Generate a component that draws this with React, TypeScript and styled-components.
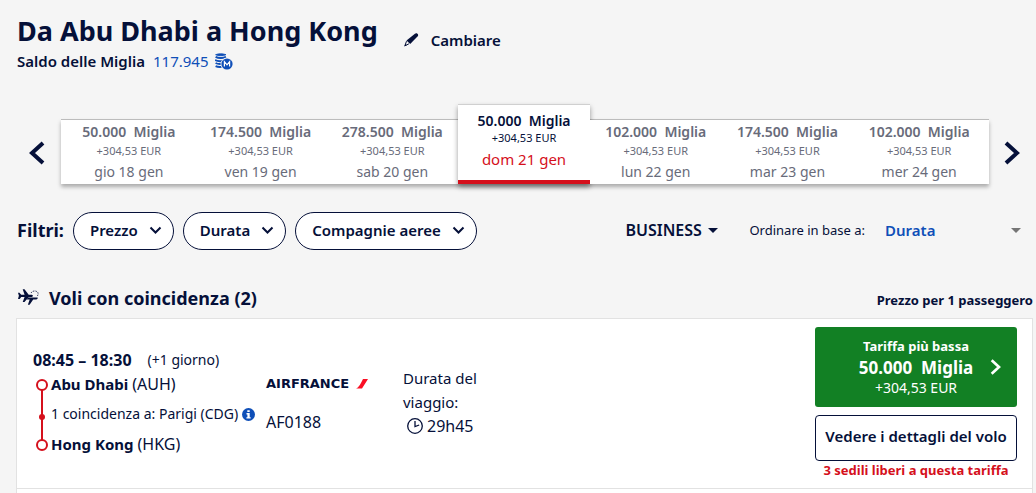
import React from "react";
import styled, { createGlobalStyle } from "styled-components";

const navy = "#051039";
const blue = "#0f4fb8";
const red = "#d5101c";
const grey = "#686b7a";

const GlobalStyle = createGlobalStyle`
  * { box-sizing: border-box; }
  body {
    margin: 0;
    background: #f5f5f5;
    color: ${navy};
    font-family: "Noto Sans", "Open Sans", sans-serif;
    font-size: 15px;
    line-height: 24px;
  }
  h1, h2, p, ul, ol { margin: 0; padding: 0; list-style: none; }
  button, select { font: inherit; color: inherit; cursor: pointer; }
  svg { display: block; flex: none; }
`;

const Page = styled.main`
  padding: 12px 3px 0 16px;
`;

const Header = styled.header`
  display: flex;
  align-items: center;
  gap: 26px;
  height: 38px;
  padding-left: 1px;
`;

const Title = styled.h1`
  font-size: 27px;
  line-height: 38px;
  font-weight: 700;
`;

const ChangeButton = styled.button`
  display: flex;
  align-items: center;
  gap: 12px;
  padding: 18px 0 0;
  border: 0;
  background: none;
  font-size: 15px;
  line-height: 20px;
  font-weight: 600;
`;

const Balance = styled.p`
  display: flex;
  align-items: center;
  gap: 8px;
  height: 24px;
  padding: 0 0 2px 1px;
  font-weight: 600;
`;

const BalanceLink = styled.a`
  display: flex;
  align-items: center;
  gap: 6px;
  color: ${blue};
  font-weight: 400;
  text-decoration: none;
`;

const Carousel = styled.nav`
  display: flex;
  align-items: flex-end;
  margin-top: 45px;
`;

const ArrowButton = styled.button<{ $side: "left" | "right" }>`
  display: flex;
  align-items: center;
  justify-content: ${(p) => (p.$side === "left" ? "flex-start" : "flex-end")};
  width: ${(p) => (p.$side === "left" ? 45 : 44)}px;
  height: 62px;
  padding: 0 12px;
  border: 0;
  background: none;
`;

const Days = styled.ol`
  && {
    padding: 0 4px 0 2px;
  }
  display: flex;
  flex: 1;
  align-items: flex-end;
  height: 65px;
  border-top: 1px solid #bcbcbc;
  background: #fff;
  box-shadow: 0 3px 4px rgba(0, 0, 0, 0.3);
`;

const Day = styled.li`
  flex: 1 1 0;
  min-width: 0;
  display: flex;
`;

const DayButton = styled.button<{ $selected?: boolean }>`
  flex: 1;
  display: flex;
  flex-direction: column;
  align-items: center;
  height: ${(p) => (p.$selected ? 80 : 64)}px;
  padding: ${(p) => (p.$selected ? 6 : 2)}px 0 0;
  border: 0;
  border-top: ${(p) => (p.$selected ? "1px solid #d0d0d0" : "0")};
  border-bottom: ${(p) => (p.$selected ? `4px solid ${red}` : "0")};
  background: #fff;
  box-shadow: ${(p) => (p.$selected ? "0 3px 5px rgba(0, 0, 0, 0.4)" : "none")};
  color: ${(p) => (p.$selected ? navy : grey)};
  white-space: nowrap;
`;

const DayMiles = styled.strong`
  font-size: 14px;
  line-height: 20px;
  font-weight: 600;
  white-space: pre;
`;

const DayTax = styled.span<{ $selected?: boolean }>`
  font-size: 11px;
  line-height: ${(p) => (p.$selected ? 14 : 18)}px;
`;

const DayDate = styled.span<{ $selected?: boolean }>`
  margin-top: ${(p) => (p.$selected ? 4 : 2)}px;
  font-size: ${(p) => (p.$selected ? 15 : 14)}px;
  line-height: 20px;
  color: ${(p) => (p.$selected ? red : "inherit")};
`;

const Toolbar = styled.section`
  display: flex;
  align-items: center;
  justify-content: space-between;
  margin-top: 28px;
  padding-left: 1px;
`;

const Filters = styled.div`
  display: flex;
  align-items: center;
  gap: 9px;
`;

const FilterLabel = styled.span`
  padding-bottom: 2px;
  font-size: 18px;
  font-weight: 700;
`;

const FilterButton = styled.button`
  display: flex;
  align-items: center;
  gap: 11px;
  height: 38px;
  padding: 0 11px 2px 16px;
  border: 1px solid ${navy};
  border-radius: 19px;
  background: #fff;
  font-weight: 600;
`;

const Sorting = styled.div`
  display: flex;
  align-items: center;
  padding: 0 12px 2px 0;
`;

const SelectWrap = styled.div<{ $gap: number }>`
  display: flex;
  align-items: center;
  margin-left: ${(p) => p.$gap}px;
`;

const Select = styled.select<{ $width: number; $color: string; $size: number }>`
  appearance: none;
  width: ${(p) => p.$width}px;
  padding: 0;
  border: 0;
  background: none;
  color: ${(p) => p.$color};
  font-size: ${(p) => p.$size}px;
  font-weight: 600;
`;

const SortLabel = styled.label`
  margin-left: 31px;
  font-size: 13px;
`;

const SectionHead = styled.div`
  display: flex;
  align-items: center;
  gap: 10px;
  height: 24px;
  margin-top: 36px;
  padding-left: 2px;
`;

const SectionTitle = styled.h2`
  flex: 1;
  font-size: 18px;
  line-height: 24px;
  font-weight: 700;
`;

const PriceNote = styled.p`
  padding-top: 4px;
  font-size: 13px;
  font-weight: 700;
`;

const Results = styled.section`
  margin-top: 8px;
  border: 1px solid #e2e2e2;
  border-bottom: 0;
  background: #fff;
`;

const FlightCard = styled.article`
  display: grid;
  grid-template-columns: 233px 137px 1fr 202px;
  height: 170px;
  padding: 8px 15px 0 16px;
  border-bottom: 1px solid #e2e2e2;
`;

const NextCard = styled.div`
  height: 4px;
`;

const Itinerary = styled.div`
  padding-top: 21px;
  white-space: nowrap;
`;

const Times = styled.p`
  display: flex;
  gap: 16px;
  font-size: 16px;
`;

const Strong = styled.strong`
  font-weight: 700;
`;

const Small = styled.span`
  font-size: 14px;
`;

const Code = styled.span`
  font-size: 16px;
`;

const Route = styled.div`
  display: flex;
  gap: 3px;
  padding-left: 3px;
`;

const Stops = styled.ul`
  display: grid;
  gap: 6px;
`;

const Stop = styled.li`
  display: flex;
  align-items: center;
  gap: 4px;
`;

const InfoButton = styled.button`
  padding: 0;
  border: 0;
  background: none;
`;

const Airline = styled.div`
  padding-top: 44px;
`;

const AirlineLogo = styled.div`
  display: flex;
  align-items: center;
  gap: 7px;
  height: 26px;
  font-family: "DejaVu Sans", sans-serif;
  font-size: 13px;
  font-weight: 700;
`;

const FlightNumber = styled.p`
  margin-top: 13px;
  font-size: 16px;
`;

const Duration = styled.div`
  width: 90px;
  padding-top: 39px;
`;

const DurationValue = styled.p`
  display: flex;
  align-items: center;
  gap: 4px;
  padding-left: 4px;
  font-size: 16px;
`;

const Fare = styled.div`
  display: flex;
  flex-direction: column;
  white-space: nowrap;
`;

const FareButton = styled.button`
  display: grid;
  grid-template-columns: 1fr auto 1fr;
  align-items: center;
  height: 80px;
  padding: 0 15px;
  border: 0;
  border-radius: 3px;
  background: #128024;
  color: #fff;
`;

const FareText = styled.span`
  grid-column: 2;
  display: grid;
  justify-items: center;
  line-height: 21px;
`;

const FareLabel = styled(Strong)`
  font-size: 13px;
`;

const FareMiles = styled(Strong)`
  font-size: 17px;
  white-space: pre;
`;

const FareTax = styled.span`
  font-size: 14px;
  line-height: 20px;
`;

const FareArrow = styled.span`
  justify-self: end;
`;

const DetailsButton = styled.button`
  height: 46px;
  margin-top: 8px;
  padding: 0 0 4px;
  border: 1px solid ${navy};
  border-radius: 4px;
  background: #fff;
  font-weight: 600;
`;

const SeatsLeft = styled.p`
  color: ${red};
  font-size: 13px;
  line-height: 18px;
  font-weight: 700;
  text-align: center;
`;

type Direction = "left" | "right" | "down";

const chevronPaths: Record<Direction, string> = {
  left: "M15 2 4 12 15 22",
  right: "M2 2 13 12 2 22",
  down: "M1.5 1.5 6.5 6.5 11.5 1.5",
};

const Chevron = ({ dir, width, height, box, stroke }: { dir: Direction; width: number; height: number; box: string; stroke: number }) => (
  <svg width={width} height={height} viewBox={box} fill="none" stroke="currentColor" strokeWidth={stroke} aria-hidden="true">
    <path d={chevronPaths[dir]} />
  </svg>
);

const Caret = ({ color }: { color: string }) => (
  <svg width="10" height="5" viewBox="0 0 10 5" fill={color} aria-hidden="true">
    <path d="M0 0h10L5 5z" />
  </svg>
);

const Pencil = () => (
  <svg width="15" height="14" viewBox="0 0 15 14" aria-hidden="true">
    <path fill={navy} d="M10.6 1.100c1-.8 1.900-1 2.800-.3.9.8 1 1.700.3 2.500L6.200 11 2.500 7.600z" />
    <path fill="none" stroke={navy} strokeWidth="1" d="M2.500 8.200.9 12.800l4-2" />
    <path fill={navy} d="M.3 13.400 1.300 11l1.400 1.300z" />
  </svg>
);

const Coins = () => (
  <svg width="18" height="17" viewBox="0 0 18 17" aria-hidden="true">
    <g fill="none" stroke={blue} strokeWidth="1.900">
      <path d="M.6 1.700c2.500-1.200 7.500-1.200 10.400 0-2.900 1.300-7.900 1.300-10.400 0z" fill={blue} strokeWidth=".8" />
      <path d="M.6 3.900c2.800 1.500 7.600 1.500 10.400 0M0 7c2 1.300 5 1.500 8 1M.6 10c1.600.9 4 1.200 6 .9M.6 13.100c1.600.8 3.800 1.100 6 .8" />
    </g>
    <circle cx="12" cy="11" r="6.400" fill="#f5f5f5" />
    <circle cx="12" cy="11" r="5.600" fill={blue} />
    <path d="M9.400 13.600V8.700L12 11.800l2.600-3.100v4.900" fill="none" stroke="#fff" strokeWidth="1.200" />
  </svg>
);

const Planes = () => (
  <svg width="21" height="18" viewBox="0 0 21 18" aria-hidden="true">
    <g fill={navy}>
      <path d="M0 3.700h1.500l1.700 2.100h3.400L4.700.2h1.800l4.200 5.600h3c1.700.3 1.700 1.900 0 2.200h-3l-4.200 5H4.700L6.600 8H3.200L1.700 10H0l.9-3.200z" />
      <path d="M10 8.500h9.600c.5 1-.4 1.900-1.500 1.900h-2.900l-3.600 5.300h-1.700l1.800-5.300H8.600z" />
    </g>
    <path fill="none" stroke={navy} strokeWidth=".8" strokeDasharray="1.500 1" d="M13 4C14 1.900 17.300 1.300 19.300 2.800c1.200 1.200 1.100 3.300-.5 5" />
  </svg>
);

const RouteLine = () => (
  <svg width="12" height="84" viewBox="0 0 12 84" aria-hidden="true">
    <path stroke={red} strokeWidth="2" d="M6 18v50" />
    <g fill="#fff" stroke={red} strokeWidth="2">
      <circle cx="6" cy="13" r="5" />
      <circle cx="6" cy="73" r="5" />
    </g>
    <circle cx="6" cy="45" r="3" fill={red} />
  </svg>
);

const Info = () => (
  <svg width="13" height="13" viewBox="0 0 13 13" aria-hidden="true">
    <circle cx="6.500" cy="6.500" r="6.500" fill={blue} />
    <path fill="#fff" d="M5.300 2.200h2.400v1.900H5.300zM4.500 5.100h3.200v4.100h1v1.300H4.400V9.200h1V6.400h-.9z" />
  </svg>
);

const Clock = () => (
  <svg width="16" height="16" viewBox="0 0 16 16" fill="none" stroke={navy} aria-hidden="true">
    <circle cx="8" cy="8" r="7.300" strokeWidth="1.300" />
    <path d="M8 3v5.500l4.200-1.500" strokeWidth="1.300" />
  </svg>
);

const days = [
  { miles: "50.000", date: "gio 18 gen" },
  { miles: "174.500", date: "ven 19 gen" },
  { miles: "278.500", date: "sab 20 gen" },
  { miles: "50.000", date: "dom 21 gen", selected: true },
  { miles: "102.000", date: "lun 22 gen" },
  { miles: "174.500", date: "mar 23 gen" },
  { miles: "102.000", date: "mer 24 gen" },
];

const filters = ["Prezzo", "Durata", "Compagnie aeree"];

export default function App() {
  return (
    <>
      <GlobalStyle />
      <Page>
        <Header>
          <Title>Da Abu Dhabi a Hong Kong</Title>
          <ChangeButton>
            <Pencil />
            Cambiare
          </ChangeButton>
        </Header>
        <Balance>
          Saldo delle Miglia
          <BalanceLink href="#miglia">
            117.945
            <Coins />
          </BalanceLink>
        </Balance>

        <Carousel aria-label="Date">
          <ArrowButton $side="left" aria-label="Giorni precedenti">
            <Chevron dir="left" width={17} height={24} box="0 0 17 24" stroke={4} />
          </ArrowButton>
          <Days>
            {days.map((d) => (
              <Day key={d.date}>
                <DayButton $selected={d.selected}>
                  <DayMiles>{`${d.miles}  Miglia`}</DayMiles>
                  <DayTax $selected={d.selected}>+304,53 EUR</DayTax>
                  <DayDate $selected={d.selected}>{d.date}</DayDate>
                </DayButton>
              </Day>
            ))}
          </Days>
          <ArrowButton $side="right" aria-label="Giorni successivi">
            <Chevron dir="right" width={17} height={24} box="0 0 17 24" stroke={4} />
          </ArrowButton>
        </Carousel>

        <Toolbar>
          <Filters>
            <FilterLabel>Filtri:</FilterLabel>
            {filters.map((f) => (
              <FilterButton key={f}>
                {f}
                <Chevron dir="down" width={13} height={9} box="0 0 13 9" stroke={2} />
              </FilterButton>
            ))}
          </Filters>
          <Sorting>
            <SelectWrap $gap={0}>
              <Select $width={83} $color={navy} $size={16} aria-label="Classe" defaultValue="BUSINESS">
                <option>BUSINESS</option>
              </Select>
              <Caret color={navy} />
            </SelectWrap>
            <SortLabel htmlFor="sort">Ordinare in base a:</SortLabel>
            <SelectWrap $gap={20}>
              <Select id="sort" $width={126} $color={blue} $size={15} defaultValue="Durata">
                <option>Durata</option>
              </Select>
              <Caret color="#757575" />
            </SelectWrap>
          </Sorting>
        </Toolbar>

        <SectionHead>
          <Planes />
          <SectionTitle>Voli con coincidenza (2)</SectionTitle>
          <PriceNote>Prezzo per 1 passeggero</PriceNote>
        </SectionHead>

        <Results>
          <FlightCard>
            <Itinerary>
              <Times>
                <Strong>08:45 – 18:30</Strong>
                <Small>(+1 giorno)</Small>
              </Times>
              <Route>
                <RouteLine />
                <Stops>
                  <Stop>
                    <Strong>Abu Dhabi</Strong> <Code>(AUH)</Code>
                  </Stop>
                  <Stop>
                    <Small>1 coincidenza a: Parigi (CDG)</Small>
                    <InfoButton aria-label="Informazioni">
                      <Info />
                    </InfoButton>
                  </Stop>
                  <Stop>
                    <Strong>Hong Kong</Strong> <Code>(HKG)</Code>
                  </Stop>
                </Stops>
              </Route>
            </Itinerary>
            <Airline>
              <AirlineLogo>
                AIRFRANCE
                <svg width="12" height="10" viewBox="0 0 12 10" aria-hidden="true">
                  <path fill="#fa0f24" d="M7 0h5L6 9.500H0C3 8.500 5 4 7 0z" />
                </svg>
              </AirlineLogo>
              <FlightNumber>AF0188</FlightNumber>
            </Airline>
            <Duration>
              <p>Durata del viaggio:</p>
              <DurationValue>
                <Clock />
                29h45
              </DurationValue>
            </Duration>
            <Fare>
              <FareButton>
                <FareText>
                  <FareLabel>Tariffa più bassa</FareLabel>
                  <FareMiles>{"50.000  Miglia"}</FareMiles>
                  <FareTax>+304,53 EUR</FareTax>
                </FareText>
                <FareArrow>
                  <Chevron dir="right" width={12} height={16} box="0 0 17 24" stroke={4} />
                </FareArrow>
              </FareButton>
              <DetailsButton>Vedere i dettagli del volo</DetailsButton>
              <SeatsLeft>3 sedili liberi a questa tariffa</SeatsLeft>
            </Fare>
          </FlightCard>
          <NextCard />
        </Results>
      </Page>
    </>
  );
}
